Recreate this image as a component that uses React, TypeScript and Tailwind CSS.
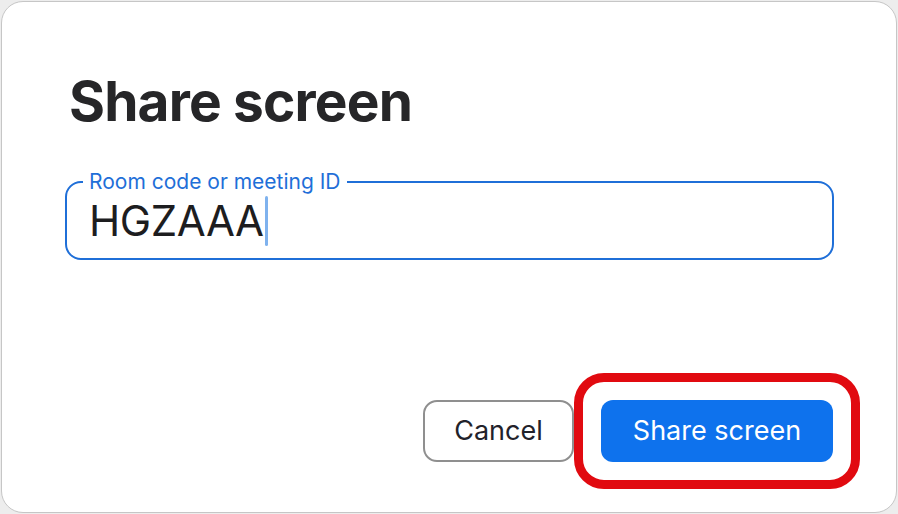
import React from "react";

export default function App() {
  return (
    <div className="w-[898px] h-[514px] bg-[#ededed] p-px" style={{ fontFamily: "Inter, 'Liberation Sans', sans-serif" }}>
      <div className="flex h-full flex-col rounded-[22px] border border-[#c6c6c6] bg-white">
        {/* Title */}
        <h1 className="pl-[67px] pt-[72px] text-[55px] font-bold leading-none tracking-[-0.015em] text-[#262628]">
          Share screen
        </h1>

        {/* Room code field */}
        <fieldset className="ml-[63px] mr-[62px] mt-[42px] h-[89px] rounded-[16px] border-2 border-[#1f6fd8] px-[22px]">
          <legend className="-ml-[6px] px-[6px] text-[21px] leading-none text-[#1f6fd8]">
            Room code or meeting ID
          </legend>
          <div className="flex items-center pt-[4px]">
            <span className="text-[42px] leading-none tracking-[-0.01em] text-[#1d1d1f]">HGZAAA</span>
            <span className="ml-px h-[50px] w-[3px] rounded-sm bg-[#7fb2ee]" />
          </div>
        </fieldset>

        <div className="flex-1" />

        {/* Buttons */}
        <div className="flex items-center justify-end pb-[23px] pr-[36px]">
          <button className="h-[62px] w-[151px] rounded-[14px] border-2 border-[#8f8f8f] bg-white text-[27px] text-[#22222a]">
            Cancel
          </button>
          <div className="rounded-[30px] border-[9px] border-[#e10a10] p-[18px]">
            <button className="h-[62px] w-[232px] rounded-[12px] bg-[#0e72ed] text-[27px] text-white">
              Share screen
            </button>
          </div>
        </div>
      </div>
    </div>
  );
}
